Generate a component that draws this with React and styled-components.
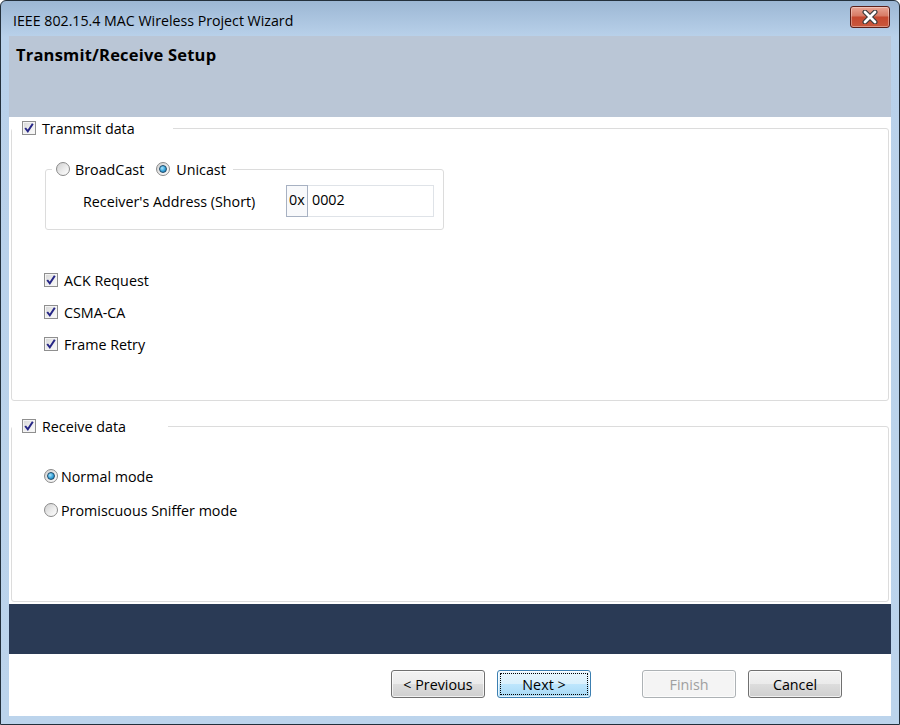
import React from 'react';
import styled, { createGlobalStyle } from 'styled-components';

const GlobalStyle = createGlobalStyle`
  html, body {
    margin: 0;
    padding: 0;
    background: #ffffff;
  }
  * {
    box-sizing: border-box;
  }
`;

const Frame = styled.div`
  width: 900px;
  height: 725px;
  display: flex;
  flex-direction: column;
  padding: 0 8px 8px 8px;
  border: 1px solid #23303c;
  border-radius: 6px 6px 0 0;
  background: linear-gradient(to bottom, #9cb7d4 0px, #b9d1ea 36px, #bcd4ec 100%);
  font-family: "Open Sans", "Noto Sans", sans-serif;
  color: #000;
  overflow: hidden;
`;

const TitleBar = styled.div`
  height: 35px;
  flex: none;
  display: flex;
  align-items: center;
  justify-content: space-between;
  padding-left: 4px;
`;

const TitleText = styled.span`
  font-size: 14.2px;
  color: #000;
  margin-top: 3px;
`;

const CloseButton = styled.div`
  width: 40px;
  height: 22px;
  margin-top: -3px;
  margin-right: 1px;
  border: 1px solid #5b1f18;
  border-radius: 3px;
  display: flex;
  align-items: center;
  justify-content: center;
  background: linear-gradient(to bottom, #e9a594 0%, #d77a64 45%, #c5482f 50%, #c9583c 100%);
  box-shadow: inset 0 0 0 1px rgba(255, 255, 255, 0.35);
`;

const Client = styled.div`
  flex: 1;
  display: flex;
  flex-direction: column;
  background: #ffffff;
`;

const Header = styled.div`
  height: 81px;
  flex: none;
  background: #bac6d6;
  padding: 7px 7px;
`;

const HeaderTitle = styled.div`
  font-size: 16.5px;
  font-weight: 700;
  letter-spacing: 0.2px;
`;

const Body = styled.div`
  flex: 1;
  display: flex;
  flex-direction: column;
  padding: 1px 2px 0 2px;
`;

const Group = styled.fieldset`
  margin: ${(p) => p.$mt || 0}px 0 0 0;
  padding: 0;
  height: ${(p) => p.$h}px;
  border: 1px solid #dcdcdc;
  border-radius: 3px;
  min-width: 0;
`;

const InnerGroup = styled(Group)`
  width: 399px;
  margin: ${(p) => p.$mt}px 0 0 33px;
`;

const Legend = styled.legend`
  height: 20px;
  width: ${(p) => p.$w}px;
  margin-left: ${(p) => p.$ml}px;
  padding: 0 0 0 ${(p) => p.$pl}px;
  display: flex;
  align-items: center;
  font-size: 14px;
`;

const Option = styled.label`
  display: flex;
  align-items: center;
  gap: ${(p) => p.$gap ?? 6}px;
  margin-right: ${(p) => p.$mr ?? 0}px;
  font-size: 14.3px;
  white-space: nowrap;
`;

const Box = styled.span`
  width: 14px;
  height: 14px;
  flex: none;
  border: 1px solid #8f8f8f;
  background: linear-gradient(135deg, #d6d6d6 0%, #eeeeee 55%, #fbfbfb 100%);
  box-shadow: inset 0 0 0 1px #f4f4f4;
  display: flex;
  align-items: center;
  justify-content: center;
`;

const Round = styled.span`
  width: 14px;
  height: 14px;
  flex: none;
  border-radius: 50%;
  border: 1px solid #8a8a8a;
  background: linear-gradient(135deg, #cfcfcf 0%, #ececec 55%, #ffffff 100%);
  display: flex;
  align-items: center;
  justify-content: center;
`;

const Dot = styled.span`
  width: 8px;
  height: 8px;
  border-radius: 50%;
  border: 1px solid #1e4a6a;
  background: radial-gradient(circle at 35% 35%, #a9e3fb 0%, #35a4dc 55%, #16679a 100%);
`;

const AddressRow = styled.div`
  display: flex;
  align-items: center;
  margin-top: 6px;
  padding-left: 37px;
`;

const FieldLabel = styled.span`
  width: 203px;
  font-size: 14.3px;
`;

const Prefix = styled.span`
  width: 22px;
  height: 32px;
  border: 1px solid #a7b1c2;
  background: #f8f9fb;
  font-size: 14.3px;
  padding: 4px 0 0 2px;
`;

const TextInput = styled.span`
  width: 126px;
  height: 32px;
  border: 1px solid #dfe3e8;
  border-left: none;
  font-size: 14.3px;
  padding: 4px 0 0 4px;
`;

const CheckList = styled.div`
  display: flex;
  flex-direction: column;
  gap: ${(p) => p.$gap}px;
  margin: ${(p) => p.$mt}px 0 0 32px;
`;

const Row = styled.div`
  height: 20px;
  display: flex;
  align-items: center;
`;

const Band = styled.div`
  height: 50px;
  flex: none;
  margin-top: 2px;
  background: #2a3a55;
`;

const Footer = styled.div`
  height: 62px;
  flex: none;
  display: flex;
  justify-content: flex-end;
  align-items: flex-start;
  padding: 16px 49px 0 0;
`;

const Button = styled.div`
  width: 94px;
  height: 28px;
  margin-left: ${(p) => p.$ml || 0}px;
  border: 1px solid ${(p) => (p.$disabled ? '#adb2b5' : p.$focus ? '#3c7fb1' : '#707070')};
  border-radius: 3px;
  background: ${(p) =>
    p.$disabled
      ? '#f4f4f4'
      : p.$focus
      ? 'linear-gradient(to bottom, #eaf6fd 0%, #d9f0fc 50%, #bee6fd 50%, #a7d9f5 100%)'
      : 'linear-gradient(to bottom, #f2f2f2 0%, #ebebeb 50%, #dddddd 50%, #cfcfcf 100%)'};
  box-shadow: inset 0 0 0 1px rgba(255, 255, 255, 0.7);
  color: ${(p) => (p.$disabled ? '#a0a0a0' : '#000')};
  font-size: 14.3px;
  display: flex;
  align-items: center;
  justify-content: center;
  position: relative;
`;

const FocusRing = styled.span`
  position: absolute;
  inset: 2px;
  border: 1px dotted #000;
  border-radius: 1px;
`;

const Check = () => (
  <svg width="12" height="12" viewBox="0 0 12 12">
    <path d="M2.2 6 L4.8 9.3 L9.8 1.8" fill="none" stroke="#262686" strokeWidth="2" />
  </svg>
);

const CheckBox = ({ children, gap }) => (
  <Option $gap={gap}>
    <Box>
      <Check />
    </Box>
    {children}
  </Option>
);

const Radio = ({ checked, children, gap, mr }) => (
  <Option $gap={gap} $mr={mr}>
    <Round>{checked && <Dot />}</Round>
    {children}
  </Option>
);

const App = () => {
  return (
    <>
      <GlobalStyle />
      <Frame>
        <TitleBar>
          <TitleText>IEEE 802.15.4 MAC Wireless Project Wizard</TitleText>
          <CloseButton>
            <svg width="16" height="14" viewBox="0 0 16 14">
              <path d="M3 2 L13 12 M13 2 L3 12" stroke="#3a3a3a" strokeWidth="5" strokeLinecap="round" />
              <path d="M3 2 L13 12 M13 2 L3 12" stroke="#ffffff" strokeWidth="2.8" strokeLinecap="round" />
            </svg>
          </CloseButton>
        </TitleBar>
        <Client>
          <Header>
            <HeaderTitle>Transmit/Receive Setup</HeaderTitle>
          </Header>
          <Body>
            <Group $h={283}>
              <Legend $w={161} $ml={0} $pl={10}>
                <CheckBox>Tranmsit data</CheckBox>
              </Legend>
              <InnerGroup $h={71} $mt={21}>
                <Legend $w={181} $ml={6} $pl={4}>
                  <Radio mr={12} gap={5}>BroadCast</Radio>
                  <Radio checked gap={6}>Unicast</Radio>
                </Legend>
                <AddressRow>
                  <FieldLabel>Receiver's Address (Short)</FieldLabel>
                  <Prefix>0x</Prefix>
                  <TextInput>0002</TextInput>
                </AddressRow>
              </InnerGroup>
              <CheckList $gap={12} $mt={40}>
                <Row>
                  <CheckBox>ACK Request</CheckBox>
                </Row>
                <Row>
                  <CheckBox>CSMA-CA</CheckBox>
                </Row>
                <Row>
                  <CheckBox>Frame Retry</CheckBox>
                </Row>
              </CheckList>
            </Group>
            <Group $h={186} $mt={15}>
              <Legend $w={156} $ml={0} $pl={10}>
                <CheckBox>Receive data</CheckBox>
              </Legend>
              <CheckList $gap={14} $mt={30}>
                <Row>
                  <Radio checked gap={3}>Normal mode</Radio>
                </Row>
                <Row>
                  <Radio gap={3}>Promiscuous Sniffer mode</Radio>
                </Row>
              </CheckList>
            </Group>
          </Body>
          <Band />
          <Footer>
            <Button>&lt; Previous</Button>
            <Button $ml={12} $focus>
              <FocusRing />
              Next &gt;
            </Button>
            <Button $ml={51} $disabled>
              Finish
            </Button>
            <Button $ml={12}>Cancel</Button>
          </Footer>
        </Client>
      </Frame>
    </>
  );
};

export default App;
